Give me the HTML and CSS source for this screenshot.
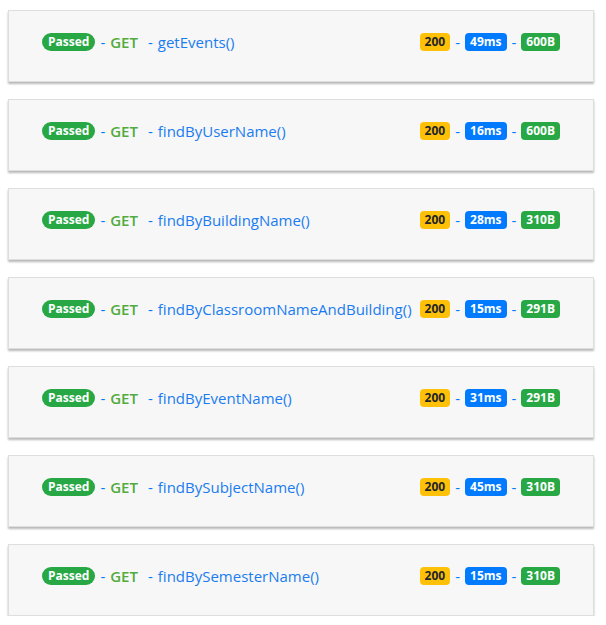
FILE: index.html
```html
<!DOCTYPE html>
<html>
<head>
<meta charset="utf-8">
<link rel="stylesheet" href="styles.css">
</head>
<body>
<div class="list">
  <div class="card">
    <div class="left"><span class="badge pill green">Passed</span><span class="dash">-</span><span class="method">GET</span><span class="dash wide">-</span><span class="fn">getEvents()</span></div>
    <div class="right"><span class="badge yellow">200</span><span class="dash">-</span><span class="badge blue">49ms</span><span class="dash">-</span><span class="badge green">600B</span></div>
  </div>
  <div class="card">
    <div class="left"><span class="badge pill green">Passed</span><span class="dash">-</span><span class="method">GET</span><span class="dash wide">-</span><span class="fn">findByUserName()</span></div>
    <div class="right"><span class="badge yellow">200</span><span class="dash">-</span><span class="badge blue">16ms</span><span class="dash">-</span><span class="badge green">600B</span></div>
  </div>
  <div class="card">
    <div class="left"><span class="badge pill green">Passed</span><span class="dash">-</span><span class="method">GET</span><span class="dash wide">-</span><span class="fn">findByBuildingName()</span></div>
    <div class="right"><span class="badge yellow">200</span><span class="dash">-</span><span class="badge blue">28ms</span><span class="dash">-</span><span class="badge green">310B</span></div>
  </div>
  <div class="card">
    <div class="left"><span class="badge pill green">Passed</span><span class="dash">-</span><span class="method">GET</span><span class="dash wide">-</span><span class="fn">findByClassroomNameAndBuilding()</span></div>
    <div class="right"><span class="badge yellow">200</span><span class="dash">-</span><span class="badge blue">15ms</span><span class="dash">-</span><span class="badge green">291B</span></div>
  </div>
  <div class="card">
    <div class="left"><span class="badge pill green">Passed</span><span class="dash">-</span><span class="method">GET</span><span class="dash wide">-</span><span class="fn">findByEventName()</span></div>
    <div class="right"><span class="badge yellow">200</span><span class="dash">-</span><span class="badge blue">31ms</span><span class="dash">-</span><span class="badge green">291B</span></div>
  </div>
  <div class="card">
    <div class="left"><span class="badge pill green">Passed</span><span class="dash">-</span><span class="method">GET</span><span class="dash wide">-</span><span class="fn">findBySubjectName()</span></div>
    <div class="right"><span class="badge yellow">200</span><span class="dash">-</span><span class="badge blue">45ms</span><span class="dash">-</span><span class="badge green">310B</span></div>
  </div>
  <div class="card">
    <div class="left"><span class="badge pill green">Passed</span><span class="dash">-</span><span class="method">GET</span><span class="dash wide">-</span><span class="fn">findBySemesterName()</span></div>
    <div class="right"><span class="badge yellow">200</span><span class="dash">-</span><span class="badge blue">15ms</span><span class="dash">-</span><span class="badge green">310B</span></div>
  </div>
</div>
</body>
</html>
```
FILE: styles.css
```css
html, body {
  margin: 0;
  padding: 0;
  background: #fff;
}
body {
  font-family: "Open Sans", "Noto Sans", sans-serif;
  font-size: 15px;
  color: #212529;
}
.list {
  display: flex;
  flex-direction: column;
  gap: 17px;
  padding: 10px 12px 0 8px;
}
.card {
  box-sizing: border-box;
  height: 72px;
  display: flex;
  justify-content: space-between;
  align-items: flex-start;
  padding: 20px 33px 0 33px;
  background: #f7f7f7;
  border: 1px solid #dedede;
  box-shadow: 0 2px 2px rgba(0, 0, 0, 0.28);
}
.left, .right {
  display: flex;
  align-items: center;
  height: 22px;
  white-space: nowrap;
}
.badge {
  display: inline-block;
  font-size: 12px;
  font-weight: 700;
  line-height: 1;
  padding: 3px 5px 3px;
  border-radius: 4px;
  color: #fff;
}
.badge.pill {
  padding: 3px 6px 3px;
  border-radius: 10px;
}
.green { background: #28a745; }
.blue { background: #007bff; }
.yellow { background: #ffc107; color: #212529; }
.dash {
  color: #007bff;
  margin: 0 5px;
}
.left .dash:first-of-type {
  margin-left: 4px;
}
.dash.wide {
  margin-left: 10px;
}
.method {
  color: #52ab3e;
  font-weight: 600;
}
.fn {
  color: #1a7cf0;
}
```
